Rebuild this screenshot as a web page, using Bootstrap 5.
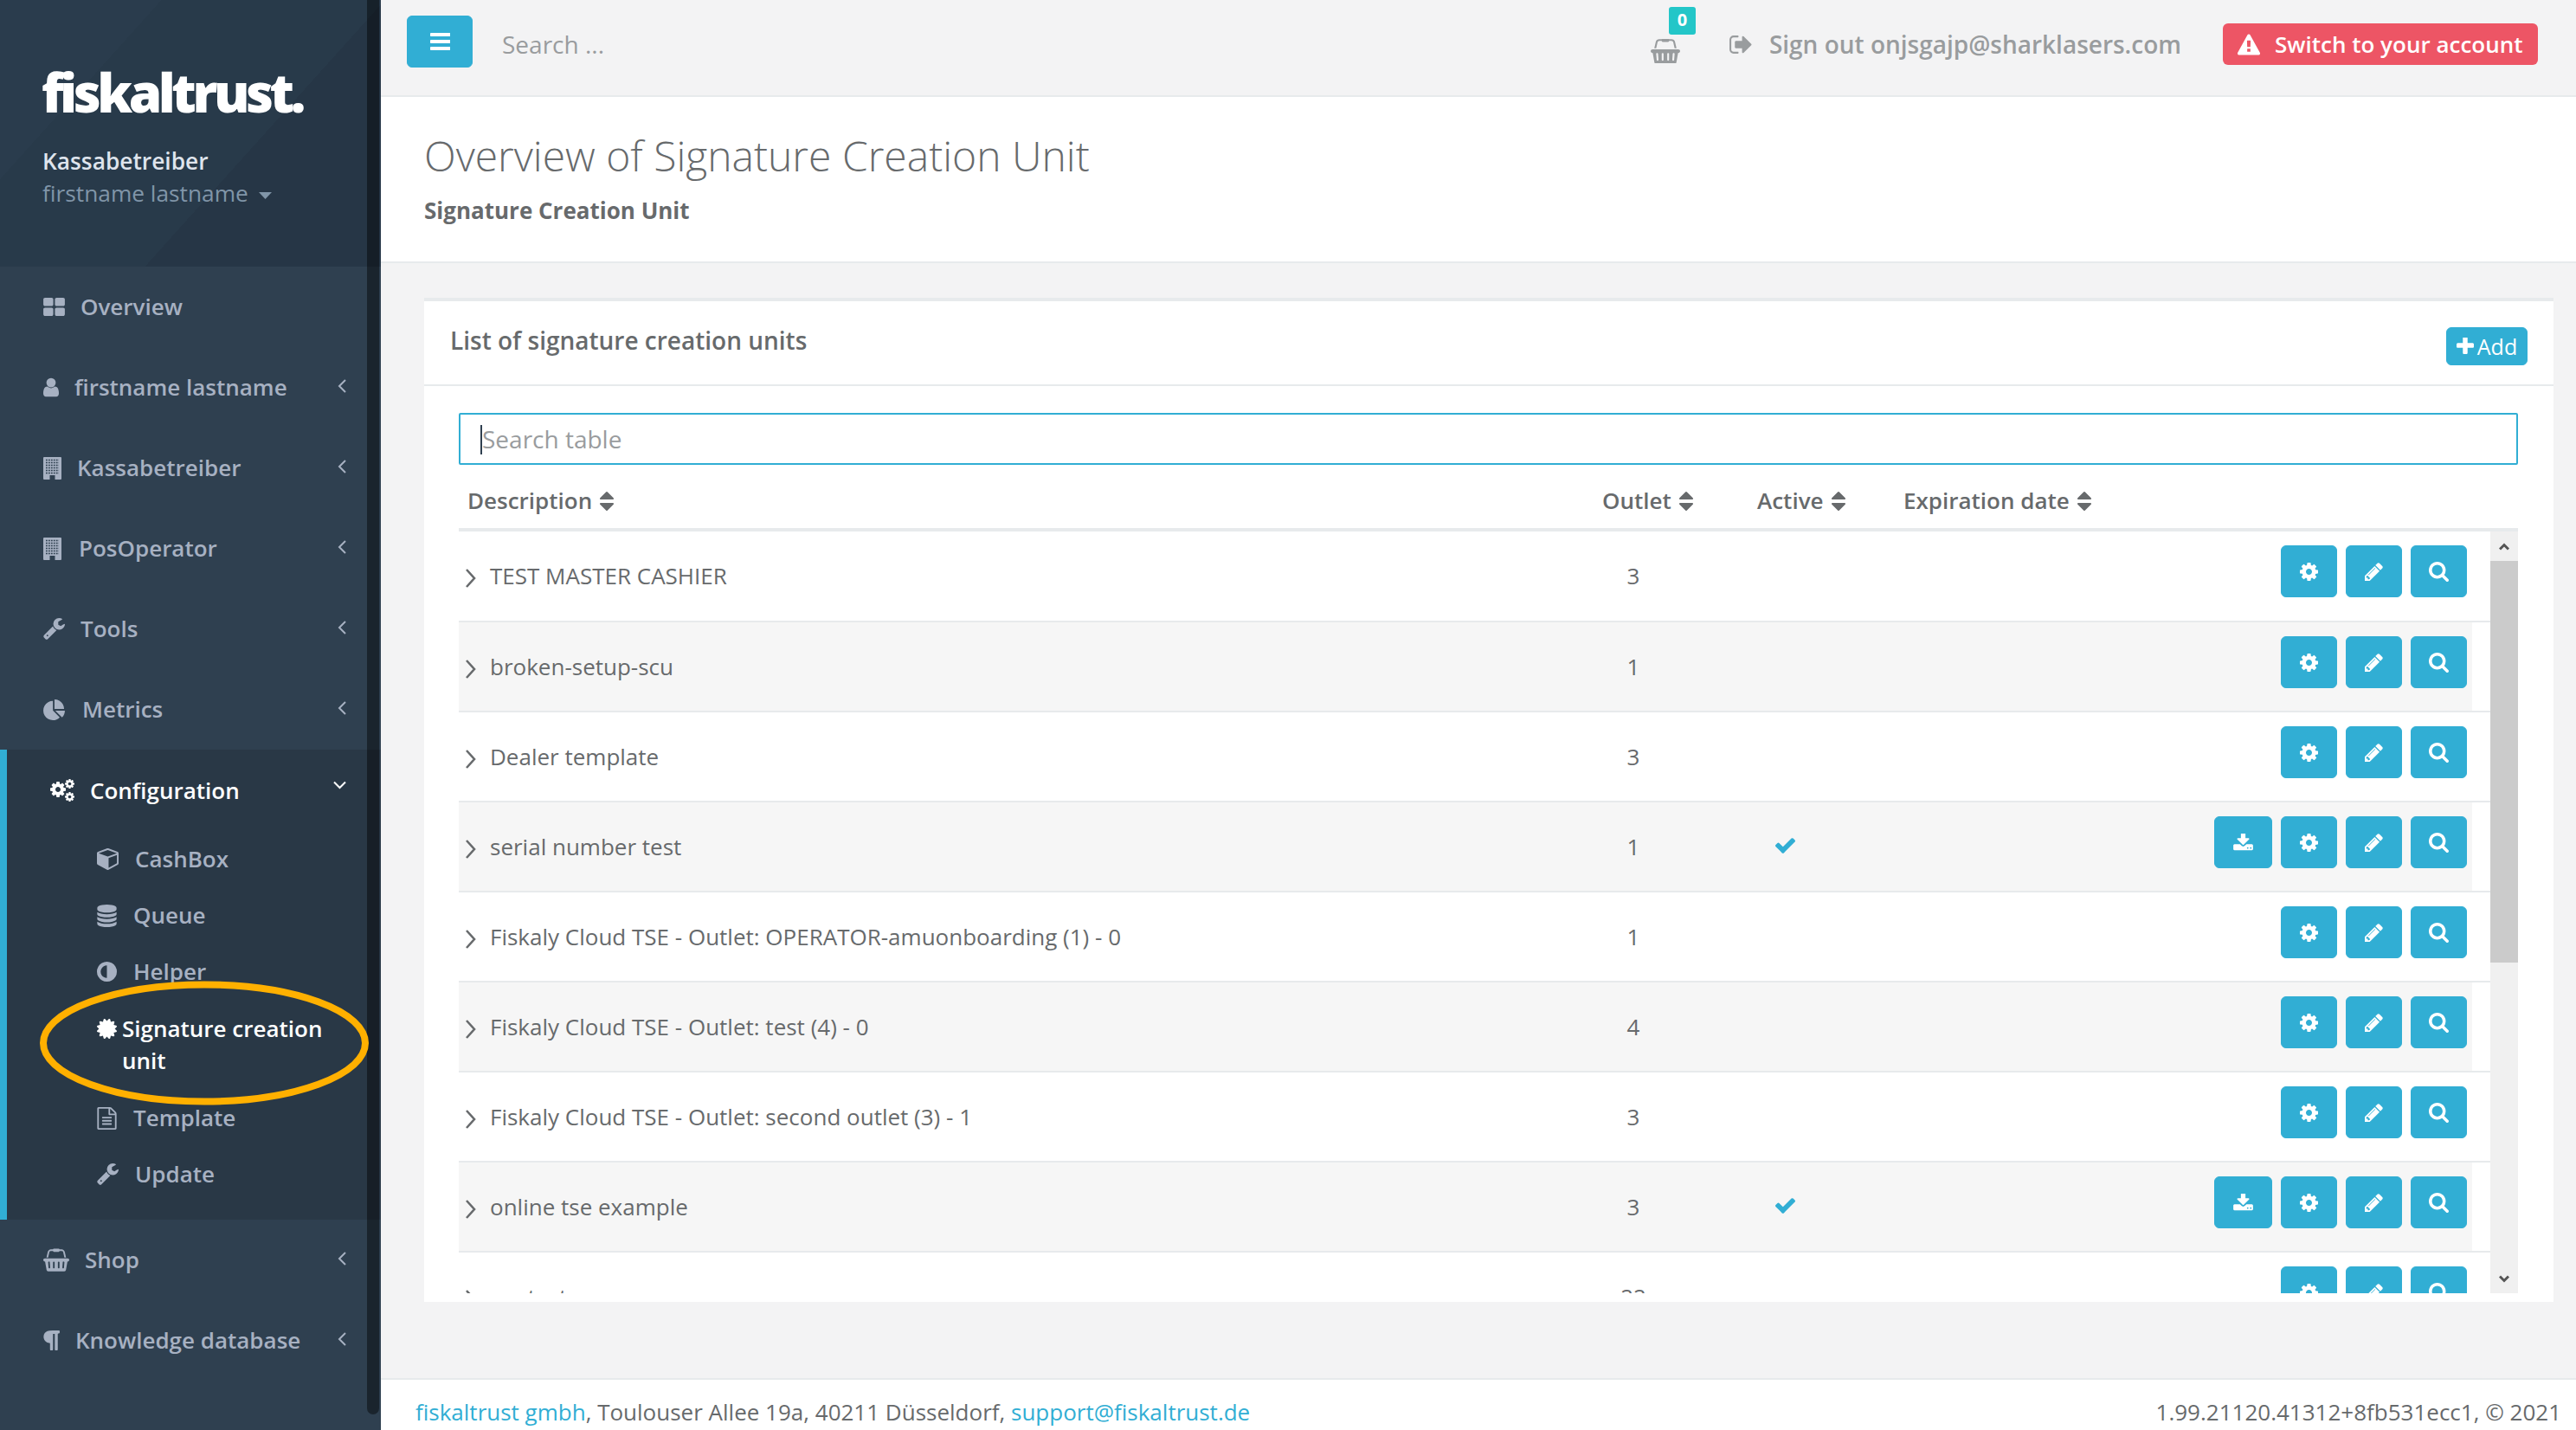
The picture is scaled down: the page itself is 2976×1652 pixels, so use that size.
<!DOCTYPE html>
<html lang="en">

<head>
    <meta charset="UTF-8" />
    <meta name="viewport" content="width=device-width, initial-scale=1.0" />
    <title>Overview of Signature Creation Unit</title>
    <link rel="stylesheet" href="https://cdn.jsdelivr.net/npm/bootstrap@5.3.3/dist/css/bootstrap.min.css">
    <style>
        body { font-family: "Open Sans", "Noto Sans", sans-serif; font-size: 26px; color: #676a6c; background: #f3f3f4; height: 1652px; overflow: hidden; }
        a { text-decoration: none; color: #31aed4; }
        .ico { fill: currentColor; flex: none; }
        .chev { fill: none; stroke: currentColor; flex: none; }

        /* sidebar */
        .side { width: 440px; height: 1652px; background: #2f4050; flex: none; }
        .side-head { height: 308px; padding: 67px 0 0 48px;
            background: linear-gradient(132deg, #2a3c4d 0 26%, #283a4a 26% 62%, #263646 62% 100%); }
        .logo { font-family: "Open Sans", sans-serif; font-weight: 800; font-size: 62px; line-height: 78px; letter-spacing: -4.5px; color: #fff; }
        .side-org { font-weight: 600; font-size: 26.300px; line-height: 37px; color: #dfe4ed; margin: 23px 0 0 1px; }
        .side-user { font-size: 26.300px; line-height: 37px; color: #8095a8; margin-left: 1px; }
        .caret-mark { margin-left: 12px; vertical-align: 3px; }
        .menu { list-style: none; margin: 0; padding: 0; }
        .menu-link { height: 93px; padding: 0 40px 0 50px; color: #a7b1c2; font-weight: 600; }
        .menu-link .ico { margin-right: 18px; }
        .menu-link .gap-more { margin-right: 20px; }
        .menu-link .chev { margin-top: -4px; }
        .menu-open { background: #293846; border-left: 8px solid #31aed4; height: 543px; }
        .menu-open > .menu-link { height: 94px; color: #fff; padding-right: 40px; }
        .menu-open > .menu-link .chev { margin-top: -12px; }
        .sub-link { padding: 14px 30px 14px 104px; line-height: 37px; color: #a7b1c2; font-weight: 600; }
        .sub-link .ico { margin-right: 19px; }
        .sub-active { color: #fff; padding-top: 15px; padding-bottom: 15px; }
        .sub-link.sub-active .ico { margin-right: 6px; margin-top: 7px; }
        .side-rail { position: absolute; left: 424px; top: 0; width: 14px; height: 1634px; background: rgba(0, 0, 0, .43); border-radius: 0 0 8px 8px; }
        .mark-ring { position: absolute; left: 0; top: 0; }

        /* top bar */
        .main-col { min-width: 0; height: 1652px; }
        .top-bar { height: 112px; background: #f3f3f4; border-bottom: 2px solid #e7eaec; padding: 0 44px 0 30px; flex: none; }
        .btn-fisk { --bs-btn-bg: #31aed4; --bs-btn-border-color: #31aed4; --bs-btn-color: #fff; --bs-btn-hover-bg: #31aed4; --bs-btn-hover-color: #fff; --bs-btn-border-radius: 6px; }
        .menu-btn { width: 76px; height: 60px; padding: 0; margin-top: -14px; }
        .top-search { color: #999c9e; font-size: 28px; margin-left: 34px; line-height: 37px; margin-top: -8px; }
        .basket-wrap { position: relative; color: #999c9e; margin-right: 56px; height: 28px; margin-top: -8px; }
        .cart-count { position: absolute; left: 21px; top: -29px; width: 31px; height: 32px; background: #23c6c8; color: #fff; border-radius: 3px; font-size: 20px; font-weight: 700; line-height: 30px; text-align: center; }
        .sign-out { color: #999c9e; font-size: 28px; font-weight: 600; margin-right: 48px; margin-top: -8px; }
        .sign-out .ico { margin-right: 20px; }
        .switch-btn { height: 48px; width: 364px; padding: 0 0 0 17px; background: #ed5565; color: #fff; border-radius: 6px; font-weight: 600; line-height: 46px; border: 0; margin-top: -8px; }
        .switch-btn .ico { margin-right: 17px; }

        /* page heading */
        .page-head { height: 192px; background: #fff; border-bottom: 2px solid #e7eaec; padding: 37px 0 0 50px; flex: none; }
        .page-title { font-size: 48px; font-weight: 300; line-height: 62px; margin: 0; color: #676a6c; }
        .page-crumb { font-weight: 700; line-height: 37px; margin-top: 14px; }

        /* card */
        .content-area { padding: 40px 26px 0 50px; min-height: 0; }
        .list-box { height: 1160px; background: #fff; border-top: 4px solid #e7eaec; border-radius: 0; border-left: 0; border-right: 0; border-bottom: 0; }
        .list-head { height: 100px; padding: 0 30px 0 30px; background: #fff; border-bottom: 2px solid #e7eaec; border-radius: 0 !important; }
        .list-title { font-weight: 600; font-size: 28px; margin-top: -7px; }
        .add-btn { height: 44px; width: 94px; padding: 0; font-size: 25px; font-weight: 400; line-height: 42px; margin-top: 8px; }
        .list-body { padding: 31px 41px 10px 40px; }
        .table-find { height: 60px; border: 2px solid #31aed4; border-radius: 2px; padding: 0 25px; font-size: 28px; color: #676a6c; }
        .table-find::placeholder { color: #999c9e; }
        .find-wrap { position: relative; }
        .fake-caret { position: absolute; left: 25px; top: 14px; width: 2px; height: 34px; background: #2f4050; }

        /* table */
        .scu-table { table-layout: fixed; margin: 0; color: #676a6c; --bs-table-color: #676a6c; }
        .scu-head th { height: 75px; padding: 10px 0 0 10px; font-weight: 600; border-bottom: 4px solid #e7eaec; vertical-align: middle; }
        .scu-head .ico { margin-left: 9px; vertical-align: -2px; }
        .w-desc { width: 1311px; }
        .w-out { width: 92px; }
        .w-act { width: 258px; }
        .w-btn { width: 665px; }
        .w-outh { width: 179px; }
        .w-acth { width: 169px; }
        .rows-wrap { height: 880px; }
        .rows-view { min-width: 0; overflow: hidden; }
        .scu-rows td { height: 104px; padding: 0; border-bottom: 2px solid #e7eaec; vertical-align: middle; background: #fff; box-shadow: none; }
        .scu-rows tr:nth-child(even) td { background: #f6f6f6; }
        .scu-rows tr td.row-tail { background: #fff; }
        .scu-rows td.row-name { padding-left: 7px; }
        .row-name .chev { margin-right: 16px; vertical-align: -5px; }
        .scu-rows td.row-btns { padding: 16px 6px 0 0; vertical-align: top; }
        .act-btn { width: 65px; height: 60px; padding: 0; display: inline-flex; align-items: center; justify-content: center; margin-left: 3.300px; }
        .act-wide { width: 67px; }
        .ok-mark { color: #31aed4; vertical-align: 2px; }
        .fake-bar { width: 32px; flex: none; background: #f0f0f0; }
        .bar-arrow { height: 34px; color: #555; }
        .bar-thumb { height: 464px; background: #cbcbcb; }

        .page-foot { height: 60px; background: #fff; border-top: 2px solid #e7eaec; padding: 19px 17px 0 40px; flex: none; line-height: 36px; }
    </style>
</head>

<body>
    <!-- shared icons -->
    <svg width="0" height="0" class="position-absolute">
        <symbol id="i-grid" viewBox="64 128 1664 1408"><path d="M832 1024v384q0 52-38 90t-90 38h-512q-52 0-90-38t-38-90v-384q0-52 38-90t90-38h512q52 0 90 38t38 90zm0-768v384q0 52-38 90t-90 38h-512q-52 0-90-38t-38-90v-384q0-52 38-90t90-38h512q52 0 90 38t38 90zm896 768v384q0 52-38 90t-90 38h-512q-52 0-90-38t-38-90v-384q0-52 38-90t90-38h512q52 0 90 38t38 90zm0-768v384q0 52-38 90t-90 38h-512q-52 0-90-38t-38-90v-384q0-52 38-90t90-38h512q52 0 90 38t38 90z"/></symbol>
        <symbol id="i-user" viewBox="256 128 1280 1536"><path d="M1536 1399q0 109-62.5 187t-150.5 78h-854q-88 0-150.5-78t-62.5-187q0-85 8.5-160.5t31.5-152 58.5-131 94-89 134.5-34.5q131 128 313 128t313-128q76 0 134.5 34.5t94 89 58.5 131 31.5 152 8.5 160.5zm-256-887q0 159-112.5 271.5t-271.5 112.5-271.5-112.5-112.5-271.5 112.5-271.5 271.5-112.5 271.5 112.5 112.5 271.5z"/></symbol>
        <symbol id="i-building" viewBox="0 0 21 26"><rect width="21" height="26" rx="1"/><path d="M3 3.500h15M3 6.500h15M3 9.500h15M3 12.500h15M3 15.500h15M3 18.500h15" fill="none" stroke="#2f4050" stroke-width="1.700" stroke-dasharray="1.800 1.150"/><rect x="7.500" y="21" width="6" height="5" fill="#2f4050"/></symbol>
        <symbol id="i-wrench" viewBox="64 128 1664 1664"><path d="M448 1472q0-26-19-45t-45-19-45 19-19 45 19 45 45 19 45-19 19-45zm644-420l-682 682q-37 37-90 37-52 0-91-37l-106-108q-38-36-38-90 0-53 38-91l681-681q39 98 114.5 173.5t173.5 114.5zm634-435q0 39-23 106-47 134-164.5 217.5t-258.5 83.5q-185 0-316.5-131.5t-131.5-316.5 131.5-316.5 316.5-131.5q58 0 121.5 16.5t107.5 46.5q16 11 16 28t-16 28l-293 169v224l193 107q5-3 79-48.5t135.5-81 70.5-35.5q15 0 23.5 10t8.5 25z"/></symbol>
        <symbol id="i-pie" viewBox="0 0 1728 1664"><path d="M768 890l546 546q-106 108-247.5 168t-298.5 60q-209 0-385.5-103t-279.5-279.5-103-385.5 103-385.5 279.5-279.5 385.5-103v762zm187 6h773q0 157-60 298.5t-168 247.5zm709-128h-768v-768q209 0 385.5 103t279.5 279.5 103 385.5z"/></symbol>
        <symbol id="i-gear" viewBox="128 128 1536 1536"><path d="M1152 896q0-106-75-181t-181-75-181 75-75 181 75 181 181 75 181-75 75-181zm512-109v222q0 12-8 23t-20 13l-185 28q-19 54-39 91 35 50 107 138 10 12 10 25t-9 23q-27 37-99 108t-94 71q-12 0-26-9l-138-108q-44 23-91 38-16 136-29 186-7 28-36 28h-222q-14 0-24.5-8.5t-11.5-21.5l-28-184q-49-16-90-37l-141 107q-10 9-25 9-14 0-25-11-126-114-165-168-7-10-7-23 0-12 8-23 15-21 51-66.5t54-70.5q-27-50-41-99l-183-27q-13-2-21-12.5t-8-23.5v-222q0-12 8-23t19-13l186-28q14-46 39-92-40-57-107-138-10-12-10-24 0-10 9-23 26-36 98.5-107.5t94.5-71.5q13 0 26 10l138 107q44-23 91-38 16-136 29-186 7-28 36-28h222q14 0 24.5 8.5t11.5 21.5l28 184q49 16 90 37l142-107q9-9 24-9 13 0 25 10 129 119 165 170 7 8 7 22 0 12-8 23-15 21-51 66.5t-54 70.5q26 50 41 98l183 28q13 2 21 12.5t8 23.5z"/></symbol>
        <symbol id="i-gears" viewBox="0 0 28 26"><use href="#i-gear" x="0" y="3" width="18" height="18"/><use href="#i-gear" x="17" y="0" width="11" height="11"/><use href="#i-gear" x="17" y="15" width="11" height="11"/></symbol>
        <symbol id="i-cube" viewBox="0 128 1664 1664"><path d="M896 1629l640-349v-636l-640 233v752zm-64-865l698-254-698-254-698 254zm832-252v768q0 35-18 65t-49 47l-704 384q-28 16-61 16t-61-16l-704-384q-31-17-49-47t-18-65v-768q0-40 23-73t61-47l704-256q22-8 44-8t44 8l704 256q38 14 61 47t23 73z"/></symbol>
        <symbol id="i-db" viewBox="128 0 1536 1792"><path d="M896 768q237 0 443-43t325-127v170q0 69-103 128t-280 93.5-385 34.5-385-34.5-280-93.5-103-128v-170q119 84 325 127t443 43zm0 768q237 0 443-43t325-127v170q0 69-103 128t-280 93.5-385 34.5-385-34.5-280-93.5-103-128v-170q119 84 325 127t443 43zm0-384q237 0 443-43t325-127v170q0 69-103 128t-280 93.5-385 34.5-385-34.5-280-93.5-103-128v-170q119 84 325 127t443 43zm0-1152q208 0 385 34.5t280 93.5 103 128v128q0 69-103 128t-280 93.5-385 34.5-385-34.5-280-93.5-103-128v-128q0-69 103-128t280-93.5 385-34.5z"/></symbol>
        <symbol id="i-adjust" viewBox="0 128 1536 1536"><path d="M768 1376v-960q-131 0-241.5 64.5t-175 175-64.5 241.5 64.5 241.5 175 175 241.5 64.5zm768-480q0 209-103 385.5t-279.5 279.5-385.5 103-385.5-103-279.5-279.5-103-385.5 103-385.5 279.5-279.5 385.5-103 385.5 103 279.5 279.5 103 385.5z"/></symbol>
        <symbol id="i-cert" viewBox="128 128 1536 1536"><path d="M1504 896l138 135q30 28 20 70-12 41-52 51l-188 48 53 186q12 41-19 70-29 31-70 19l-186-53-48 188q-10 40-51 52-12 2-19 2-31 0-51-22l-135-138-135 138q-28 30-70 20-41-11-51-52l-48-188-186 53q-41 12-70-19-31-29-19-70l53-186-188-48q-40-10-52-51-10-42 20-70l138-135-138-135q-30-28-20-70 12-41 52-51l188-48-53-186q-12-41 19-70 29-31 70-19l186 53 48-188q10-41 51-51 41-12 70 19l135 139 135-139q29-30 70-19 41 10 51 51l48 188 186-53q41-12 70 19 31 29 19 70l-53 186 188 48q40 10 52 51 10 42-20 70z"/></symbol>
        <symbol id="i-file" viewBox="128 0 1536 1792"><path d="M1596 380q28 28 48 76t20 88v1152q0 40-28 68t-68 28h-1344q-40 0-68-28t-28-68v-1600q0-40 28-68t68-28h896q40 0 88 20t76 48zm-444-244v376h376q-10-29-22-41l-313-313q-12-12-41-22zm384 1528v-1024h-416q-40 0-68-28t-28-68v-416h-768v1536h1280zm-1024-864q0-14 9-23t23-9h704q14 0 23 9t9 23v64q0 14-9 23t-23 9h-704q-14 0-23-9t-9-23v-64zm736 224q14 0 23 9t9 23v64q0 14-9 23t-23 9h-704q-14 0-23-9t-9-23v-64q0-14 9-23t23-9h704zm0 256q14 0 23 9t9 23v64q0 14-9 23t-23 9h-704q-14 0-23-9t-9-23v-64q0-14 9-23t23-9h704z"/></symbol>
        <symbol id="i-basket" viewBox="0 64 2048 1664"><path d="M1920 768q53 0 90.5 37.5t37.5 90.5-37.5 90.5-90.5 37.5h-15l-115 662q-8 46-44 76t-82 30h-1280q-46 0-82-30t-44-76l-115-662h-15q-53 0-90.5-37.5t-37.5-90.5 37.5-90.5 90.5-37.5h1792zm-1435 800q26-2 43.5-22.5t15.5-46.5l-32-416q-2-26-22.5-43.5t-46.5-15.5-43.5 22.5-15.5 46.5l32 416q2 25 20.5 42t43.5 17h5zm411-64v-416q0-26-19-45t-45-19-45 19-19 45v416q0 26 19 45t45 19 45-19 19-45zm384 0v-416q0-26-19-45t-45-19-45 19-19 45v416q0 26 19 45t45 19 45-19 19-45zm352 5l32-416q2-26-15.5-46.5t-43.5-22.5-46.5 15.5-22.5 43.5l-32 416q-2 26 15.5 46.5t43.5 22.5h5q25 0 43.5-17t20.5-42zm-1156-1217l-93 412h-132l101-441q19-88 89-143.5t160-55.5h167q0-26 19-45t45-19h384q26 0 45 19t19 45h167q90 0 160 55.5t89 143.5l101 441h-132l-93-412q-11-44-45.5-72t-79.5-28h-167q0 26-19 45t-45 19h-384q-26 0-45-19t-19-45h-167q-45 0-79.5 28t-45.5 72z"/></symbol>
        <symbol id="i-para" viewBox="256 128 1280 1536"><path d="M1534 189v73q0 29-18.5 61t-42.5 32q-50 0-54 1-26 6-32 31-3 11-3 64v1152q0 25-18 43t-43 18h-108q-25 0-43-18t-18-43v-1218h-143v1218q0 25-17.5 43t-43.5 18h-108q-26 0-43.5-18t-17.5-43v-496q-147-12-245-59-126-58-192-179-64-117-64-259 0-166 88-286 88-118 209-159 111-37 417-37h479q25 0 43 18t18 43z"/></symbol>
        <symbol id="i-signout" viewBox="0 256 1664 1280"><path d="M704 1440q0 4 1 20t.5 26.5-3 23.5-10 19.5-20.5 6.5h-320q-119 0-203.5-84.5t-84.5-203.5v-704q0-119 84.5-203.5t203.5-84.5h320q13 0 22.5 9.5t9.5 22.5q0 4 1 20t.5 26.5-3 23.5-10 19.5-20.5 6.5h-320q-66 0-113 47t-47 113v704q0 66 47 113t113 47h312l11.5 1 11.5 3 8 5.5 7 9 2 13.5zm928-544q0 26-19 45l-544 544q-19 19-45 19t-45-19-19-45v-288h-448q-26 0-45-19t-19-45v-384q0-26 19-45t45-19h448v-288q0-26 19-45t45-19 45 19l544 544q19 19 19 45z"/></symbol>
        <symbol id="i-warn" viewBox="0 0 1792 1664"><path d="M1024 1375v-190q0-14-9.5-23.5t-22.5-9.5h-192q-13 0-22.5 9.5t-9.5 23.5v190q0 14 9.5 23.5t22.5 9.5h192q13 0 22.5-9.5t9.5-23.5zm-2-374l18-459q0-12-10-19-13-11-24-11h-220q-11 0-24 11-10 7-10 21l17 457q0 10 10 16.5t24 6.5h185q14 0 23.5-6.5t10.5-16.5zm-14-934l768 1408q35 63-2 126-17 29-46.5 46t-63.5 17h-1536q-34 0-63.5-17t-46.5-46q-37-63-2-126l768-1408q17-31 47-49t65-18 65 18 47 49z"/></symbol>
        <symbol id="i-bars" viewBox="128 256 1536 1280"><path d="M1664 1344v128q0 26-19 45t-45 19h-1408q-26 0-45-19t-19-45v-128q0-26 19-45t45-19h1408q26 0 45 19t19 45zm0-512v128q0 26-19 45t-45 19h-1408q-26 0-45-19t-19-45v-128q0-26 19-45t45-19h1408q26 0 45 19t19 45zm0-512v128q0 26-19 45t-45 19h-1408q-26 0-45-19t-19-45v-128q0-26 19-45t45-19h1408q26 0 45 19t19 45z" transform="translate(64 0)"/></symbol>
        <symbol id="i-plus" viewBox="192 192 1408 1408"><path d="M1600 736v192q0 40-28 68t-68 28h-416v416q0 40-28 68t-68 28h-192q-40 0-68-28t-28-68v-416h-416q-40 0-68-28t-28-68v-192q0-40 28-68t68-28h416v-416q0-40 28-68t68-28h192q40 0 68 28t28 68v416h416q40 0 68 28t28 68z"/></symbol>
        <symbol id="i-sort" viewBox="384 192 1024 1408"><path d="M1408 1088q0 26-19 45l-448 448q-19 19-45 19t-45-19l-448-448q-19-19-19-45t19-45 45-19h896q26 0 45 19t19 45zm0-384q0 26-19 45t-45 19h-896q-26 0-45-19t-19-45 19-45l448-448q19-19 45-19t45 19l448 448q19 19 19 45z"/></symbol>
        <symbol id="i-pencil" viewBox="128 128 1536 1536"><path d="M491 1536l91-91-235-235-91 91v107h128v128h107zm523-928q0-22-22-22-10 0-17 7l-542 542q-7 7-7 17 0 22 22 22 10 0 17-7l542-542q7-7 7-17zm-54-192l416 416-832 832h-416v-416zm683 96q0 53-37 90l-166 166-416-416 166-165q36-38 90-38 53 0 91 38l235 234q37 39 37 91z"/></symbol>
        <symbol id="i-search" viewBox="64 128 1664 1664"><path d="M1216 832q0-185-131.5-316.5t-316.5-131.5-316.5 131.5-131.5 316.5 131.5 316.5 316.5 131.5 316.5-131.5 131.5-316.5zm512 832q0 52-38 90t-90 38q-54 0-90-38l-343-342q-179 124-399 124-143 0-273.5-55.5t-225-150-150-225-55.5-273.5 55.5-273.5 150-225 225-150 273.5-55.5 273.5 55.5 225 150 150 225 55.5 273.5q0 220-124 399l343 343q37 37 37 90z"/></symbol>
        <symbol id="i-down" viewBox="64 128 1664 1536"><path d="M1344 1344q0-26-19-45t-45-19-45 19-19 45 19 45 45 19 45-19 19-45zm256 0q0-26-19-45t-45-19-45 19-19 45 19 45 45 19 45-19 19-45zm128-224v320q0 40-28 68t-68 28h-1472q-40 0-68-28t-28-68v-320q0-40 28-68t68-28h465l135 136q58 56 136 56t136-56l136-136h464q40 0 68 28t28 68zm-325-569q17 41-14 70l-448 448q-18 19-45 19t-45-19l-448-448q-31-29-14-70 17-39 59-39h256v-448q0-26 19-45t45-19h256q26 0 45 19t19 45v448h256q42 0 59 39z"/></symbol>
        <symbol id="i-check" viewBox="128 256 1536 1280"><path d="M1671 566q0 40-28 68l-724 724-136 136q-28 28-68 28t-68-28l-136-136-362-362q-28-28-28-68t28-68l136-136q28-28 68-28t68 28l294 295 656-657q28-28 68-28t68 28l136 136q28 28 28 68z"/></symbol>
    </svg>

    <div class="d-flex">
        <!-- sidebar -->
        <nav class="side position-relative">
            <div class="side-head">
                <div class="logo">fiskaltrust.</div>
                <div class="side-org">Kassabetreiber</div>
                <div class="side-user">firstname lastname<svg class="ico caret-mark" width="15" height="8" viewBox="0 0 15 8"><path d="M0 0h15L7.500 8z"/></svg></div>
            </div>
            <ul class="menu">
                <li><a class="menu-link d-flex align-items-center" href="#"><svg class="ico" width="25" height="21"><use href="#i-grid"/></svg>Overview</a></li>
                <li><a class="menu-link d-flex align-items-center" href="#"><svg class="ico" width="18" height="23"><use href="#i-user"/></svg>firstname lastname<svg class="chev ms-auto" width="10" height="16" viewBox="0 0 10 16" stroke-width="2"><path d="M9 1 2 8l7 7"/></svg></a></li>
                <li><a class="menu-link d-flex align-items-center" href="#"><svg class="ico" width="21" height="26"><use href="#i-building"/></svg>Kassabetreiber<svg class="chev ms-auto" width="10" height="16" viewBox="0 0 10 16" stroke-width="2"><path d="M9 1 2 8l7 7"/></svg></a></li>
                <li><a class="menu-link d-flex align-items-center" href="#"><svg class="ico gap-more" width="21" height="26"><use href="#i-building"/></svg>PosOperator<svg class="chev ms-auto" width="10" height="16" viewBox="0 0 10 16" stroke-width="2"><path d="M9 1 2 8l7 7"/></svg></a></li>
                <li><a class="menu-link d-flex align-items-center" href="#"><svg class="ico" width="25" height="25"><use href="#i-wrench"/></svg>Tools<svg class="chev ms-auto" width="10" height="16" viewBox="0 0 10 16" stroke-width="2"><path d="M9 1 2 8l7 7"/></svg></a></li>
                <li><a class="menu-link d-flex align-items-center" href="#"><svg class="ico gap-more" width="25" height="24"><use href="#i-pie"/></svg>Metrics<svg class="chev ms-auto" width="10" height="16" viewBox="0 0 10 16" stroke-width="2"><path d="M9 1 2 8l7 7"/></svg></a></li>
                <li class="menu-open">
                    <a class="menu-link d-flex align-items-center" href="#"><svg class="ico" width="28" height="26"><use href="#i-gears"/></svg>Configuration<svg class="chev ms-auto" width="15" height="10" viewBox="0 0 15 10" stroke-width="2"><path d="M1 1.500l6.500 6.500L14 1.500"/></svg></a>
                    <ul class="menu">
                        <li><a class="sub-link d-flex align-items-center" href="#"><svg class="ico" width="25" height="25"><use href="#i-cube"/></svg>CashBox</a></li>
                        <li><a class="sub-link d-flex align-items-center" href="#"><svg class="ico" width="23" height="26"><use href="#i-db"/></svg>Queue</a></li>
                        <li><a class="sub-link d-flex align-items-center" href="#"><svg class="ico" width="23" height="23"><use href="#i-adjust"/></svg>Helper</a></li>
                        <li><a class="sub-link sub-active d-flex align-items-start" href="#"><svg class="ico" width="23" height="23"><use href="#i-cert"/></svg><span>Signature creation unit</span></a></li>
                        <li><a class="sub-link d-flex align-items-center" href="#"><svg class="ico" width="23" height="26"><use href="#i-file"/></svg>Template</a></li>
                        <li><a class="sub-link d-flex align-items-center" href="#"><svg class="ico" width="25" height="25"><use href="#i-wrench"/></svg>Update</a></li>
                    </ul>
                </li>
                <li><a class="menu-link d-flex align-items-center" href="#"><svg class="ico" width="30" height="27"><use href="#i-basket"/></svg>Shop<svg class="chev ms-auto" width="10" height="16" viewBox="0 0 10 16" stroke-width="2"><path d="M9 1 2 8l7 7"/></svg></a></li>
                <li><a class="menu-link d-flex align-items-center" href="#"><svg class="ico" width="19" height="23"><use href="#i-para"/></svg>Knowledge database<svg class="chev ms-auto" width="10" height="16" viewBox="0 0 10 16" stroke-width="2"><path d="M9 1 2 8l7 7"/></svg></a></li>
            </ul>
            <div class="side-rail"></div>
            <svg class="mark-ring" width="440" height="1652"><ellipse cx="236" cy="1205" rx="186" ry="67.500" fill="none" stroke="#ffb000" stroke-width="8"/></svg>
        </nav>

        <!-- main column -->
        <div class="main-col flex-grow-1 d-flex flex-column">
            <div class="top-bar d-flex align-items-center">
                <button class="btn btn-fisk menu-btn d-flex align-items-center justify-content-center"><svg class="ico" width="24" height="20"><use href="#i-bars"/></svg></button>
                <div class="top-search">Search ...</div>
                <div class="basket-wrap ms-auto">
                    <svg class="ico" width="34" height="28"><use href="#i-basket"/></svg>
                    <span class="cart-count">0</span>
                </div>
                <a class="sign-out d-flex align-items-center" href="#"><svg class="ico" width="27" height="21"><use href="#i-signout"/></svg>Sign out onjsgajp@sharklasers.com</a>
                <button class="switch-btn d-flex align-items-center"><svg class="ico" width="26" height="25"><use href="#i-warn"/></svg>Switch to your account</button>
            </div>

            <div class="page-head">
                <h2 class="page-title">Overview of Signature Creation Unit</h2>
                <div class="page-crumb">Signature Creation Unit</div>
            </div>

            <div class="content-area flex-grow-1">
                <div class="card list-box">
                    <div class="card-header list-head d-flex align-items-center justify-content-between">
                        <span class="list-title">List of signature creation units</span>
                        <button class="btn btn-fisk add-btn d-flex align-items-center justify-content-center gap-1"><svg class="ico" width="20" height="20"><use href="#i-plus"/></svg>Add</button>
                    </div>
                    <div class="list-body">
                        <div class="find-wrap">
                            <input type="text" class="form-control table-find" placeholder="Search table" />
                            <span class="fake-caret"></span>
                        </div>
                        <table class="table scu-table scu-head">
                            <thead>
                                <tr>
                                    <th class="w-desc">Description<svg class="ico" width="16" height="22"><use href="#i-sort"/></svg></th>
                                    <th class="w-outh">Outlet<svg class="ico" width="16" height="22"><use href="#i-sort"/></svg></th>
                                    <th class="w-acth">Active<svg class="ico" width="16" height="22"><use href="#i-sort"/></svg></th>
                                    <th>Expiration date<svg class="ico" width="16" height="22"><use href="#i-sort"/></svg></th>
                                </tr>
                            </thead>
                        </table>
                        <div class="rows-wrap d-flex">
                            <div class="rows-view flex-grow-1">
                                <table class="table scu-table scu-rows">
                                    <colgroup><col class="w-desc"><col class="w-out"><col class="w-act"><col class="w-btn"><col></colgroup>
                                    <tbody>
                                        <tr>
                                            <td class="row-name"><svg class="chev" width="13" height="24" viewBox="0 0 13 24" stroke-width="2.600"><path d="M2 2l9 10-9 10"/></svg>TEST MASTER CASHIER</td>
                                            <td class="text-center">3</td><td></td>
                                            <td class="row-btns text-end"><button class="btn btn-fisk act-btn"><svg class="ico" width="21" height="21"><use href="#i-gear"/></svg></button> <button class="btn btn-fisk act-btn"><svg class="ico" width="21" height="21"><use href="#i-pencil"/></svg></button> <button class="btn btn-fisk act-btn"><svg class="ico" width="23" height="23"><use href="#i-search"/></svg></button></td>
                                            <td class="row-tail"></td>
                                        </tr>
                                        <tr>
                                            <td class="row-name"><svg class="chev" width="13" height="24" viewBox="0 0 13 24" stroke-width="2.600"><path d="M2 2l9 10-9 10"/></svg>broken-setup-scu</td>
                                            <td class="text-center">1</td><td></td>
                                            <td class="row-btns text-end"><button class="btn btn-fisk act-btn"><svg class="ico" width="21" height="21"><use href="#i-gear"/></svg></button> <button class="btn btn-fisk act-btn"><svg class="ico" width="21" height="21"><use href="#i-pencil"/></svg></button> <button class="btn btn-fisk act-btn"><svg class="ico" width="23" height="23"><use href="#i-search"/></svg></button></td>
                                            <td class="row-tail"></td>
                                        </tr>
                                        <tr>
                                            <td class="row-name"><svg class="chev" width="13" height="24" viewBox="0 0 13 24" stroke-width="2.600"><path d="M2 2l9 10-9 10"/></svg>Dealer template</td>
                                            <td class="text-center">3</td><td></td>
                                            <td class="row-btns text-end"><button class="btn btn-fisk act-btn"><svg class="ico" width="21" height="21"><use href="#i-gear"/></svg></button> <button class="btn btn-fisk act-btn"><svg class="ico" width="21" height="21"><use href="#i-pencil"/></svg></button> <button class="btn btn-fisk act-btn"><svg class="ico" width="23" height="23"><use href="#i-search"/></svg></button></td>
                                            <td class="row-tail"></td>
                                        </tr>
                                        <tr>
                                            <td class="row-name"><svg class="chev" width="13" height="24" viewBox="0 0 13 24" stroke-width="2.600"><path d="M2 2l9 10-9 10"/></svg>serial number test</td>
                                            <td class="text-center">1</td><td class="text-center"><svg class="ico ok-mark" width="23" height="19"><use href="#i-check"/></svg></td>
                                            <td class="row-btns text-end"><button class="btn btn-fisk act-btn act-wide"><svg class="ico" width="23" height="21"><use href="#i-down"/></svg></button> <button class="btn btn-fisk act-btn"><svg class="ico" width="21" height="21"><use href="#i-gear"/></svg></button> <button class="btn btn-fisk act-btn"><svg class="ico" width="21" height="21"><use href="#i-pencil"/></svg></button> <button class="btn btn-fisk act-btn"><svg class="ico" width="23" height="23"><use href="#i-search"/></svg></button></td>
                                            <td class="row-tail"></td>
                                        </tr>
                                        <tr>
                                            <td class="row-name"><svg class="chev" width="13" height="24" viewBox="0 0 13 24" stroke-width="2.600"><path d="M2 2l9 10-9 10"/></svg>Fiskaly Cloud TSE - Outlet: OPERATOR-amuonboarding (1) - 0</td>
                                            <td class="text-center">1</td><td></td>
                                            <td class="row-btns text-end"><button class="btn btn-fisk act-btn"><svg class="ico" width="21" height="21"><use href="#i-gear"/></svg></button> <button class="btn btn-fisk act-btn"><svg class="ico" width="21" height="21"><use href="#i-pencil"/></svg></button> <button class="btn btn-fisk act-btn"><svg class="ico" width="23" height="23"><use href="#i-search"/></svg></button></td>
                                            <td class="row-tail"></td>
                                        </tr>
                                        <tr>
                                            <td class="row-name"><svg class="chev" width="13" height="24" viewBox="0 0 13 24" stroke-width="2.600"><path d="M2 2l9 10-9 10"/></svg>Fiskaly Cloud TSE - Outlet: test (4) - 0</td>
                                            <td class="text-center">4</td><td></td>
                                            <td class="row-btns text-end"><button class="btn btn-fisk act-btn"><svg class="ico" width="21" height="21"><use href="#i-gear"/></svg></button> <button class="btn btn-fisk act-btn"><svg class="ico" width="21" height="21"><use href="#i-pencil"/></svg></button> <button class="btn btn-fisk act-btn"><svg class="ico" width="23" height="23"><use href="#i-search"/></svg></button></td>
                                            <td class="row-tail"></td>
                                        </tr>
                                        <tr>
                                            <td class="row-name"><svg class="chev" width="13" height="24" viewBox="0 0 13 24" stroke-width="2.600"><path d="M2 2l9 10-9 10"/></svg>Fiskaly Cloud TSE - Outlet: second outlet (3) - 1</td>
                                            <td class="text-center">3</td><td></td>
                                            <td class="row-btns text-end"><button class="btn btn-fisk act-btn"><svg class="ico" width="21" height="21"><use href="#i-gear"/></svg></button> <button class="btn btn-fisk act-btn"><svg class="ico" width="21" height="21"><use href="#i-pencil"/></svg></button> <button class="btn btn-fisk act-btn"><svg class="ico" width="23" height="23"><use href="#i-search"/></svg></button></td>
                                            <td class="row-tail"></td>
                                        </tr>
                                        <tr>
                                            <td class="row-name"><svg class="chev" width="13" height="24" viewBox="0 0 13 24" stroke-width="2.600"><path d="M2 2l9 10-9 10"/></svg>online tse example</td>
                                            <td class="text-center">3</td><td class="text-center"><svg class="ico ok-mark" width="23" height="19"><use href="#i-check"/></svg></td>
                                            <td class="row-btns text-end"><button class="btn btn-fisk act-btn act-wide"><svg class="ico" width="23" height="21"><use href="#i-down"/></svg></button> <button class="btn btn-fisk act-btn"><svg class="ico" width="21" height="21"><use href="#i-gear"/></svg></button> <button class="btn btn-fisk act-btn"><svg class="ico" width="21" height="21"><use href="#i-pencil"/></svg></button> <button class="btn btn-fisk act-btn"><svg class="ico" width="23" height="23"><use href="#i-search"/></svg></button></td>
                                            <td class="row-tail"></td>
                                        </tr>
                                        <tr>
                                            <td class="row-name"><svg class="chev" width="13" height="24" viewBox="0 0 13 24" stroke-width="2.600"><path d="M2 2l9 10-9 10"/></svg>my test</td>
                                            <td class="text-center">22</td><td></td>
                                            <td class="row-btns text-end"><button class="btn btn-fisk act-btn"><svg class="ico" width="21" height="21"><use href="#i-gear"/></svg></button> <button class="btn btn-fisk act-btn"><svg class="ico" width="21" height="21"><use href="#i-pencil"/></svg></button> <button class="btn btn-fisk act-btn"><svg class="ico" width="23" height="23"><use href="#i-search"/></svg></button></td>
                                            <td class="row-tail"></td>
                                        </tr>
                                    </tbody>
                                </table>
                            </div>
                            <div class="fake-bar d-flex flex-column">
                                <div class="bar-arrow d-flex align-items-center justify-content-center"><svg class="chev" width="12" height="9" viewBox="0 0 12 9" stroke-width="3"><path d="M1 7.500l5-5 5 5"/></svg></div>
                                <div class="bar-thumb"></div>
                                <div class="flex-grow-1"></div>
                                <div class="bar-arrow d-flex align-items-center justify-content-center"><svg class="chev" width="12" height="9" viewBox="0 0 12 9" stroke-width="3"><path d="M1 1.500l5 5 5-5"/></svg></div>
                            </div>
                        </div>
                    </div>
                </div>
            </div>

            <div class="page-foot d-flex justify-content-between">
                <span><a href="#">fiskaltrust gmbh</a>, Toulouser Allee 19a, 40211 Düsseldorf, <a href="#">support@fiskaltrust.de</a></span>
                <span>1.99.21120.41312+8fb531ecc1, © 2021</span>
            </div>
        </div>
    </div>

    <script src="https://cdn.jsdelivr.net/npm/bootstrap@5.3.3/dist/js/bootstrap.bundle.min.js"></script>
</body>

</html>
